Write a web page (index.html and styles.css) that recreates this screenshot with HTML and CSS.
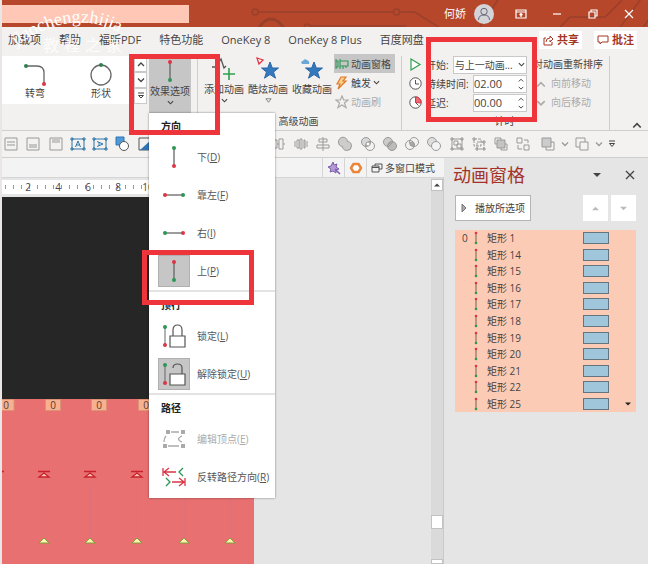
FILE: index.html
```
<!DOCTYPE html>
<html lang="zh-CN">
<head>
  <meta charset="UTF-8" />
  <title>动画窗格</title>
  <link rel="stylesheet" href="styles.css">
</head>
<body>
  <svg class="defs" width="0" height="0">
    <symbol id="up" viewBox="0 0 8 8"><path d="M1 6l3-3 3 3" fill="none" stroke="currentColor" stroke-width="1.3"/></symbol>
    <symbol id="down" viewBox="0 0 8 8"><path d="M1 2.500l3 3 3-3" fill="none" stroke="currentColor" stroke-width="1.3"/></symbol>
    <symbol id="solid-up" viewBox="0 0 8 8"><path d="M0 6l4-4 4 4z" fill="currentColor"/></symbol>
    <symbol id="solid-down" viewBox="0 0 8 8"><path d="M0 2l4 4 4-4z" fill="currentColor"/></symbol>
    <symbol id="star" viewBox="0 0 24 24"><path d="M14 5l2.300 6h6.200l-5 4 2 6.200-5.500-3.700-5.500 3.700 2-6.200-5-4h6.200z" fill="#3478bd" stroke="#2a65a5"/></symbol>
    <symbol id="path-v" viewBox="0 0 24 24"><path d="M12 3v18" stroke="#666" stroke-width="1.300"/><circle cx="12" cy="3" r="2" fill="#2f9555"/><circle cx="12" cy="21" r="2" fill="#dc3545"/></symbol>
    <symbol id="path-up" viewBox="0 0 24 24"><path d="M12 3v18" stroke="#666" stroke-width="1.300"/><circle cx="12" cy="3" r="2" fill="#dc3545"/><circle cx="12" cy="21" r="2" fill="#2f9555"/></symbol>
  </svg>

  <div class="app">
    <header class="titlebar">
      <svg class="circuit" viewBox="0 0 438 27" preserveAspectRatio="xMinYMin slice">
        <g fill="none" stroke="#99402c" stroke-width="1.500">
          <circle cx="46" cy="12" r="3"/><path d="M49 12h135"/><circle cx="187" cy="12" r="3"/><path d="M190 12h15l24 15"/>
          <path d="M50 27q12-16 24 0" stroke-width="3"/><circle cx="98" cy="27" r="3"/><path d="M101 26h96"/>
          <path d="M270 27l18-27M350 27l10-10h35l17-17M410 27l20-27M433 27l5-7"/>
        </g>
      </svg>
      <div class="doc-name"></div>
      <div class="account">
        <span>何娇</span>
        <svg width="20" height="20" viewBox="0 0 20 20"><circle cx="10" cy="10" r="10" fill="#d4d5d8"/><circle cx="10" cy="7.500" r="3.200" fill="none" stroke="#667"/><path d="M4.500 16q0-5 5.500-5t5.500 5" fill="none" stroke="#667"/></svg>
      </div>
      <div class="window-buttons">
        <button aria-label="功能区显示选项"><svg width="12" height="12" viewBox="0 0 12 12"><path d="M1 2h10v8H1zM1 4h10M6 9V5.500M4.500 7L6 5.500 7.500 7"/></svg></button>
        <button aria-label="最小化"><svg width="12" height="12" viewBox="0 0 12 12"><path d="M2 6h8"/></svg></button>
        <button aria-label="还原"><svg width="12" height="12" viewBox="0 0 12 12"><path d="M2 4h6v6H2zM4 4V2h6v6H8"/></svg></button>
        <button aria-label="关闭"><svg width="12" height="12" viewBox="0 0 12 12"><path d="M2 2l8 8M10 2l-8 8"/></svg></button>
      </div>
    </header>

    <nav class="tabs">
      <a href="#">加载项</a>
      <a href="#">帮助</a>
      <a href="#">福昕PDF</a>
      <a href="#">特色功能</a>
      <a href="#">OneKey 8</a>
      <a href="#">OneKey 8 Plus</a>
      <a href="#">百度网盘</a>
      <div class="tab-actions">
        <button><svg width="12" height="12" viewBox="0 0 12 12"><path d="M4 4H2v7h8V8M4 8q0-4 4-4V2l3 3-3 3V6"/></svg>共享</button>
        <button><svg width="12" height="12" viewBox="0 0 12 12"><path d="M1 2h10v6H5l-2 2V8H1z"/></svg>批注</button>
      </div>
    </nav>

    <section class="ribbon">
      <div class="gallery">
        <button class="gallery-item"><svg width="26" height="26" viewBox="0 0 26 26"><path d="M3 6h12q7 0 7 7v11" fill="none" stroke="#666" stroke-width="1.300"/><circle cx="4" cy="6" r="2" fill="#2f8050"/><circle cx="22" cy="24" r="2" fill="#dc3545"/></svg>转弯</button>
        <button class="gallery-item"><svg width="26" height="26" viewBox="0 0 26 26"><circle cx="13" cy="15" r="10" fill="none" stroke="#666" stroke-width="1.300"/><circle cx="13" cy="5" r="2" fill="#2f8050"/></svg>形状</button>
        <div class="gallery-scroll">
          <button aria-label="上一行"><svg width="8" height="8"><use href="#up"/></svg></button>
          <button aria-label="下一行"><svg width="8" height="8"><use href="#down"/></svg></button>
          <button aria-label="其他"><svg width="8" height="8" viewBox="0 0 8 8"><path d="M1 1h6M1.500 3.500h5L4 6z" fill="none" stroke="#444"/></svg></button>
        </div>
      </div>
      <button class="effect-button"><svg width="24" height="24"><use href="#path-up"/></svg>效果选项<svg width="7" height="7"><use href="#down"/></svg></button>

      <div class="group">
        <div class="group-body">
          <button class="big-button"><svg width="24" height="24" viewBox="0 0 24 24"><path d="M0 10h4l5-8 3 9 2-2" fill="none" stroke="#555" stroke-width="1.300"/><path d="M17 11v12M11 17h12" stroke="#2fa04f" stroke-width="1.600"/></svg>添加动画<svg width="7" height="7"><use href="#down"/></svg></button>
          <button class="big-button"><svg width="24" height="24" viewBox="0 0 24 24"><use href="#star"/><path d="M1 1l6 2-4 4z" fill="#fff" stroke="#dc3545" stroke-width="1.300"/></svg>酷炫动画<svg width="7" height="7" viewBox="0 0 8 8"><path d="M1 2h6L4 6z" fill="none" stroke="#777"/></svg></button>
          <button class="big-button"><svg width="24" height="24" viewBox="0 0 24 24"><use href="#star"/><path d="M2 7q-2-3 1-3 1-3 4-1 3 1 2 4z" fill="#69a7d8"/></svg>收藏动画</button>
          <div class="small-buttons">
            <button class="active"><svg width="14" height="12" viewBox="0 0 14 12"><path d="M1 1v10M1 3h2v6H1M5 1v10M5 3h8v5H5M8 8v3M11 8v2" fill="none" stroke="#2f9555" stroke-width="1.100"/></svg>动画窗格</button>
            <button><svg width="14" height="14" viewBox="0 0 14 14"><path d="M6 1h5L8 5h3L3 13l2-5H2z" fill="#fbd08a" stroke="#e0782a" stroke-width="1.200"/></svg>触发<svg width="7" height="7"><use href="#down"/></svg></button>
            <button disabled><svg width="14" height="14" viewBox="0 0 14 14"><path d="M7 1l1.700 4H13L9.500 8l1.500 4.500L7 10l-4 2.500L4.500 8 1 5h4.300z" fill="none" stroke="#aaa" stroke-width="1.200"/></svg>动画刷</button>
          </div>
        </div>
        <div class="group-name">高级动画</div>
      </div>

      <div class="group">
        <div class="group-body timing-body">
          <div class="timing">
            <div class="field">
              <svg width="13" height="13" viewBox="0 0 13 13"><path d="M2 1l9 5.500L2 12z" fill="#fff" stroke="#2fa04f" stroke-width="1.200"/></svg>
              <label for="start">开始:</label>
              <div class="box select-box"><select id="start"><option>与上一动画...</option></select><svg width="7" height="7"><use href="#down"/></svg></div>
            </div>
            <div class="field">
              <svg width="13" height="13" viewBox="0 0 13 13"><circle cx="6.500" cy="6.500" r="5.700" fill="#fff" stroke="#555"/><path d="M6.500 3v4H10" fill="none" stroke="#555"/></svg>
              <label for="duration" class="wide">持续时间:</label>
              <div class="box spin-box"><input id="duration" type="text" value="02.00"><div class="spin"><svg width="6" height="6"><use href="#up"/></svg><svg width="6" height="6"><use href="#down"/></svg></div></div>
            </div>
            <div class="field">
              <svg width="13" height="13" viewBox="0 0 13 13"><circle cx="6.500" cy="6.500" r="5.700" fill="#fff" stroke="#555"/><path d="M6.500 6.500V1a5.500 5.500 0 0 1 5.500 6z" fill="#f06a72" stroke="#dc3545"/><path d="M6.500 6.500l3 3" stroke="#555"/></svg>
              <label for="delay" class="wide">延迟:</label>
              <div class="box spin-box"><input id="delay" type="text" value="00.00"><div class="spin"><svg width="6" height="6"><use href="#up"/></svg><svg width="6" height="6"><use href="#down"/></svg></div></div>
            </div>
          </div>
          <div class="reorder">
            <span>对动画重新排序</span>
            <button disabled><svg width="10" height="10"><use href="#up"/></svg>向前移动</button>
            <button disabled><svg width="10" height="10"><use href="#down"/></svg>向后移动</button>
          </div>
        </div>
        <div class="group-name">计时</div>
      </div>
      <button class="collapse" aria-label="折叠功能区"><svg width="10" height="10"><use href="#up"/></svg></button>
    </section>

    <div class="toolbar">
      <div class="tools">
        <svg viewBox="0 0 16 16"><path d="M2 2h12v12H2zM4 6h8M4 9h8"/></svg>
        <svg viewBox="0 0 16 16"><path d="M2 2h12v12H2zM4 9h8M4 11h8"/></svg>
        <svg viewBox="0 0 16 16"><path d="M2 2h12v12H2zM4 4h8M4 6h8"/></svg>
        <svg viewBox="0 0 16 16" class="blue"><path d="M2 3h12v10H2zM5.500 11L8 5l2.500 6M6.500 9h3"/><path d="M1 2h2v2H1zM13 2h2v2h-2zM1 12h2v2H1zM13 12h2v2h-2z"/></svg>
        <svg viewBox="0 0 16 16" class="blue"><path d="M2 3h12v10H2zM5 5.500L11 8l-6 2.500M7 6.500v3"/><path d="M1 2h2v2H1zM13 2h2v2h-2zM1 12h2v2H1zM13 12h2v2h-2z"/></svg>
        <svg viewBox="0 0 16 16"><path d="M2 1h8v8H2z" fill="#4f9bd9" stroke="#2f75b5"/><circle cx="10" cy="10" r="4.500" fill="#fff" stroke="#555"/></svg>
        <svg viewBox="0 0 16 16"><path d="M2 2h12v12H2z" stroke="#555"/><path d="M3 14L14 4v10z" fill="#2f75b5" stroke="none"/></svg>
        <svg viewBox="0 0 16 16"><path d="M8 1v14M3 3h10v3H3zM5 9h6v3H5z"/></svg>
        <svg viewBox="0 0 16 16"><path d="M2 1v14M4 3h9v3H4zM4 9h6v3H4z"/></svg>
        <svg viewBox="0 0 16 16"><path d="M14 1v14M3 3h9v3H3zM6 9h6v3H6z"/></svg>
        <svg viewBox="0 0 16 16"><path d="M1 2h14M3 4h3v9H3zM9 4h3v6H9z"/></svg>
        <svg viewBox="0 0 16 16"><path d="M1 14h14M3 3h3v9H3zM9 6h3v6H9z"/></svg>
        <svg viewBox="0 0 16 16"><path d="M1 8h2M7 8h2M13 8h2M3 4h4v8H3zM9 3h4v10H9z"/></svg>
        <svg viewBox="0 0 16 16"><path d="M2 5v6M14 5v6M4 4h2v8H4zM7 3h2v10H7zM11 4h1v8h-1z"/></svg>
        <svg viewBox="0 0 16 16"><path d="M8 1v14M4 3h8v3H4zM2 9h12v3H2z"/></svg>
        <svg viewBox="0 0 16 16"><path d="M1.500 6a4.500 4.500 0 0 1 9-.500 4.500 4.500 0 1 1-5 5 4.500 4.500 0 0 1-4-4.500z" fill="#ccc"/></svg>
        <svg viewBox="0 0 16 16"><circle cx="6" cy="6" r="4.500" fill="#d8d8d8"/><circle cx="10" cy="10" r="4.500"/><circle cx="8" cy="8" r="2" fill="#fff"/></svg>
        <svg viewBox="0 0 16 16"><circle cx="6" cy="6" r="4.500" fill="#ccc"/><circle cx="10" cy="10" r="4.500" fill="#bbb"/><path d="M5 10L10 5M6 11l5-5"/></svg>
        <svg viewBox="0 0 16 16"><circle cx="6" cy="9" r="4.500"/><circle cx="10" cy="6" r="4.500"/><circle cx="8" cy="8" r="2" fill="#aaa"/></svg>
        <svg viewBox="0 0 16 16"><circle cx="6" cy="6" r="4.500" fill="#ddd"/><circle cx="10" cy="10" r="4.500" fill="#f3f3f3"/></svg>
        <svg viewBox="0 0 16 16"><path d="M3 3h10v10H3zM5 5h4v4H5zM8 8h4v4H8z"/><path d="M2 2h2v2H2zM12 2h2v2h-2zM2 12h2v2H2zM12 12h2v2h-2z"/></svg>
        <svg viewBox="0 0 16 16"><path d="M3 3h7v7H3zM6 6h7v7H6z" stroke-dasharray="3 1"/><path d="M2 2h2v2H2zM12 12h2v2h-2zM12 5h2v2h-2zM5 12h2v2H5z"/></svg>
        <svg viewBox="0 0 16 16"><path d="M2 2h6v6H2zM8 8h6v6H8z"/><path d="M4 4h8v8H4z" fill="#c4c4c4"/></svg>
        <svg viewBox="0 0 16 16"><path d="M2 2h5v5H2zM9 9h5v5H9zM9 4h4v3M3 9v4h4"/></svg>
      </div>
      <div class="more-tools">
        <svg viewBox="0 0 16 16"><path d="M6 6h8v8H6z"/><path d="M2 2h9v9H2z" fill="#ccc"/></svg>
        <svg class="caret"><use href="#down"/></svg>
        <svg viewBox="0 0 16 16"><path d="M2 2h9v9H2z"/><path d="M6 6h8v8H6z" fill="#f3f3f3"/></svg>
        <svg class="caret"><use href="#down"/></svg>
        <svg class="caret" viewBox="0 0 8 8"><path d="M1 1h6M1.500 3.500h5L4 6.500z" stroke="#444"/></svg>
      </div>
    </div>

    <main class="workspace">
      <section class="editor">
        <div class="mode-bar">
          <button aria-label="魔棒"><svg width="14" height="14" viewBox="0 0 14 14"><path d="M6 1l1 3 3-1-1 3 3 2-3 1v3L6 10l-3 1 1-3-3-2 3-1z" fill="#b49bd8" stroke="#7d5bab"/><path d="M8 8l5 5" stroke="#7d5bab" stroke-width="1.500"/></svg></button>
          <button aria-label="设置"><svg width="14" height="14" viewBox="0 0 14 14"><path d="M4.500 3h5L12 7l-2.500 4h-5L2 7z" fill="#fff" stroke="#e8873c" stroke-width="2.500" stroke-linejoin="round"/></svg></button>
          <button class="window-mode"><svg width="12" height="12" viewBox="0 0 12 12"><path d="M1 4h7v6H1zM1 5.500h7M4 4V2h7v5H8" fill="none" stroke="#555"/></svg>多窗口模式</button>
        </div>
        <div class="canvas-row">
          <div class="canvas">
            <div class="ruler"><span>2</span><span>4</span><span>6</span><span>8</span><span>10</span></div>
            <svg class="slide" width="252" height="367" viewBox="0 0 252 367">
              <rect width="252" height="367" fill="#262626"/>
              <rect y="202" width="252" height="165" fill="#e87070"/>
              <g fill="#f7b090" stroke="#dc9275">
                <path d="M-3 202.500h15v11H-3zM43.500 202.500h15v11h-15zM89.500 202.500h15v11h-15zM136.500 202.500h15v11h-15z"/>
              </g>
              <g class="tag-text"><text x="4" y="212">0</text><text x="51" y="212">0</text><text x="97" y="212">0</text><text x="144" y="212">0</text></g>
              <path d="M42.500 285v55M88.500 285v55M135.500 285v55M182.500 285v55M228.500 285v55" stroke="#de7078"/>
              <g fill="#f9c9b5" stroke="#c8202c" stroke-width="1.300">
                <path d="M36 274.500h12M37 280l5-4 5 4zM82 274.500h12M83 280l5-4 5 4zM129 274.500h12M130 280l5-4 5 4zM-4 274.500h6"/>
              </g>
              <g fill="#fdf5b0" stroke="#7fa03a">
                <path d="M37 346l5-5 5 5zM83 346l5-5 5 5zM130 346l5-5 5 5zM177 346l5-5 5 5zM223 346l5-5 5 5z"/>
              </g>
            </svg>
          </div>
          <div class="scrollbar">
            <button aria-label="向上滚动"><svg width="6" height="6"><use href="#solid-up"/></svg></button>
            <div class="thumb"></div>
            <div class="thumb end"></div>
          </div>
        </div>
      </section>

      <aside class="pane">
        <div class="pane-head">
          <h2>动画窗格</h2>
          <button aria-label="窗格选项"><svg width="8" height="8"><use href="#solid-down"/></svg></button>
          <button aria-label="关闭窗格"><svg width="10" height="10" viewBox="0 0 10 10"><path d="M1 1l8 8M9 1L1 9" stroke="#444" stroke-width="1.300"/></svg></button>
        </div>
        <div class="pane-tools">
          <button class="play"><svg width="6" height="8" viewBox="0 0 6 8"><path d="M1 0l4 4-4 4z" fill="#aaa" stroke="#777"/></svg>播放所选项</button>
          <button class="move" aria-label="上移"><svg width="7" height="7"><use href="#solid-up"/></svg></button>
          <button class="move" aria-label="下移"><svg width="7" height="7"><use href="#solid-down"/></svg></button>
        </div>
        <ul class="effects" id="effects"></ul>
      </aside>
    </main>

    <div class="menu">
      <h3>方向</h3>
      <button><span class="icon"><svg width="24" height="24"><use href="#path-v"/></svg></span>下(<u>D</u>)</button>
      <button><span class="icon"><svg width="24" height="24" viewBox="0 0 24 24"><path d="M3 12h18" stroke="#666" stroke-width="1.300"/><circle cx="3" cy="12" r="2" fill="#dc3545"/><circle cx="21" cy="12" r="2" fill="#2f9555"/></svg></span>靠左(<u>F</u>)</button>
      <button><span class="icon"><svg width="24" height="24" viewBox="0 0 24 24"><path d="M3 12h18" stroke="#666" stroke-width="1.300"/><circle cx="3" cy="12" r="2" fill="#2f9555"/><circle cx="21" cy="12" r="2" fill="#dc3545"/></svg></span>右(<u>I</u>)</button>
      <button><span class="icon selected"><svg width="24" height="24"><use href="#path-up"/></svg></span>上(<u>P</u>)</button>
      <hr>
      <h3>顶行</h3>
      <button><span class="icon"><svg width="24" height="24" viewBox="0 0 24 24"><path d="M3 3v18" stroke="#666"/><circle cx="3" cy="3" r="2" fill="#2f9555"/><circle cx="3" cy="21" r="2" fill="#dc3545"/><path d="M8 12h15v11H8zM11 12V6q0-5 4.500-5T20 6v6" fill="none" stroke="#555" stroke-width="1.200"/></svg></span>锁定(<u>L</u>)</button>
      <button><span class="icon selected"><svg width="24" height="24" viewBox="0 0 24 24"><path d="M3 3v18" stroke="#666"/><circle cx="3" cy="3" r="2" fill="#2f9555"/><circle cx="3" cy="21" r="2" fill="#dc3545"/><path d="M8 12h15v11H8z" fill="#fff" stroke="#555" stroke-width="1.200"/><path d="M11 6q0-4 4.500-4T20 6v6" fill="none" stroke="#555" stroke-width="1.200"/></svg></span>解除锁定(<u>U</u>)</button>
      <hr>
      <h3>路径</h3>
      <button disabled><span class="icon"><svg width="24" height="24" viewBox="0 0 24 24"><path d="M9 5h8M6 19h11M4 9q-2 2-2 6M20 9q-7 3 0 6" fill="none" stroke="#aaa" stroke-width="1.300"/><path d="M4 3h4v4H4zM19 3h4v4h-4zM1 17h4v4H1zM19 17h4v4h-4z" fill="#aaa"/></svg></span>编辑顶点(<u>E</u>)</button>
      <button><span class="icon"><svg width="24" height="24" viewBox="0 0 24 24"><g fill="none" stroke-width="1.300"><path d="M1 3v8M7 3L2 7l5 4M2 7h12M23 13v8M17 13l5 4-5 4M10 17h12" stroke="#dc3545"/><path d="M21 3l-4 4 4 4M4 13l4 4-4 4" stroke="#2f9555"/></g></svg></span>反转路径方向(<u>R</u>)</button>
    </div>

    <!-- site watermark and the callout frames lie over the whole window -->
    <svg class="watermark" width="160" height="64" viewBox="0 0 160 64">
      <path id="arc" d="M14 46Q76 2 130 40" fill="none"/>
      <text class="mark-latin"><textPath href="#arc">jiaochengzhijia</textPath></text>
      <text class="mark-han" x="41 62 83 104" y="51">教程之家</text>
    </svg>
    <div class="callout callout-effect"></div>
    <div class="callout callout-timing"></div>
    <div class="callout callout-up"></div>
  </div>

  <script>
    const effects = [1, 14, 15, 16, 17, 18, 19, 20, 21, 22, 25];
    const list = document.getElementById("effects");

    effects.forEach((number, i) => {
      const item = document.createElement("li");
      const last = i === effects.length - 1;
      item.innerHTML = `
        <span class="order">${i === 0 ? "0" : ""}</span>
        <svg width="4" height="14" viewBox="0 0 4 14"><path d="M2 1v12" stroke="#75604f"/><circle cx="2" cy="2" r="1.300" fill="#dc3545"/><circle cx="2" cy="12" r="1.300" fill="#2f9555"/></svg>
        <span class="name">矩形 ${number}</span>
        <span class="bar"></span>
        <span class="more">${last ? '<svg width="6" height="6"><use href="#solid-down"/></svg>' : ""}</span>`;
      list.appendChild(item);
    });
  </script>
</body>
</html>
```

FILE: styles.css
```
* {
  box-sizing: border-box;
}

body {
  margin: 0;
  background: #e5e5e5;
  color: #444;
  font-family: "Open Sans", "Noto Sans CJK SC", sans-serif;
  font-size: 10px;
  line-height: 14px;
}

button,
input,
select {
  font: inherit;
  color: inherit;
  margin: 0;
  padding: 0;
  border: none;
  background: none;
}

button {
  display: flex;
  align-items: center;
  justify-content: center;
  white-space: nowrap;
}

svg {
  flex: none;
}

.defs {
  position: absolute;
}

.app {
  position: relative;
  display: flex;
  flex-direction: column;
  height: 100vh;
  overflow: hidden;
  border-left: 2px solid #e9e6e5;
}

/* title bar */
.titlebar {
  position: relative;
  display: flex;
  align-items: center;
  flex: none;
  height: 27px;
  background: #b7472a;
  color: #fff;
}

.circuit {
  position: absolute;
  right: 0;
  top: 0;
  width: 68%;
  height: 27px;
}

.doc-name {
  width: 187px;
  height: 18px;
  background: #ffc7b5;
}

.account {
  position: relative;
  display: flex;
  align-items: center;
  gap: 8px;
  margin-left: auto;
  font-size: 11px;
}

.window-buttons {
  position: relative;
  display: flex;
  padding: 0 1px 0 9px;
}

.window-buttons button {
  width: 36px;
  height: 27px;
}

.window-buttons svg {
  fill: none;
  stroke: #fff;
  stroke-width: 1.2;
}

/* tabs */
.tabs {
  display: flex;
  align-items: center;
  gap: 18px;
  flex: none;
  height: 27px;
  padding: 0 11px 2px 6px;
  background: #f3f1f0;
  font-size: 11px;
}

.tabs a {
  color: #444;
  text-decoration: none;
  white-space: nowrap;
}

.tab-actions {
  display: flex;
  gap: 12px;
  margin-left: auto;
}

.tab-actions button {
  gap: 3px;
  height: 18px;
  padding: 0 3px;
  background: #fff;
  color: #a5371f;
  font-weight: bold;
}

.tab-actions svg {
  fill: none;
  stroke: #a5371f;
}

/* ribbon */
.ribbon {
  display: flex;
  flex: none;
  height: 77px;
  padding-top: 2px;
  background: #f3f1f0;
  border-bottom: 1px solid #d0cecd;
}

.gallery {
  display: flex;
  height: 48px;
  background: #fff;
}

.gallery-item {
  flex-direction: column;
  width: 66px;
}

.gallery-scroll button {
  width: 13px;
  height: 16px;
  border: 1px solid #c9c9c9;
}

.effect-button {
  flex-direction: column;
  gap: 1px;
  width: 42px;
  height: 57px;
  margin: 0 6px 0 2px;
  padding-bottom: 4px;
  background: #c6c6c6;
}

.group {
  display: flex;
  flex-direction: column;
  padding: 0 6px 0 4px;
  border-left: 1px solid #d0cecd;
}

.group:nth-of-type(3) {
  border-right: 1px solid #d0cecd;
}

.group-body {
  display: flex;
  height: 58px;
}

.group-name {
  text-align: center;
}

.big-button {
  flex-direction: column;
  justify-content: flex-start;
  gap: 1px;
  width: 44px;
  padding-top: 1px;
}

.small-buttons {
  display: flex;
  flex-direction: column;
  width: 61px;
  height: 57px;
  margin-top: -2px;
}

.small-buttons button {
  justify-content: flex-start;
  gap: 2px;
  height: 19px;
  padding-left: 1px;
}

.small-buttons .active {
  background: #c6c6c6;
}

button:disabled {
  color: #aaa;
}

.timing-body {
  gap: 6px;
  padding-left: 3px;
}

.timing {
  width: 118px;
  margin-top: -1px;
}

.field {
  display: flex;
  align-items: center;
  gap: 4px;
  height: 19px;
}

.field label {
  white-space: nowrap;
}

.field .wide {
  width: 43px;
}

.box {
  display: flex;
  align-items: center;
  flex: 1;
  min-width: 0;
  height: 18px;
  background: #fff;
  border: 1px solid #c9c9c9;
}

.select-box select {
  flex: 1;
  min-width: 0;
  height: 16px;
  padding-left: 1px;
  appearance: none;
}

.select-box svg {
  margin: 0 1px;
}

.spin-box input {
  flex: 1;
  min-width: 0;
  width: 20px;
  height: 16px;
  font-size: 11px;
}

.spin {
  display: flex;
  flex-direction: column;
  gap: 2px;
  padding-right: 2px;
}

.reorder {
  display: flex;
  flex-direction: column;
  margin-top: -1px;
  white-space: nowrap;
}

.reorder span,
.reorder button {
  height: 19px;
  line-height: 19px;
}

.reorder button {
  justify-content: flex-start;
  gap: 5px;
  padding-left: 3px;
}

.collapse {
  align-self: flex-end;
  margin: 0 6px 0 auto;
}

/* quick access toolbar */
.toolbar {
  display: flex;
  align-items: center;
  flex: none;
  height: 27px;
  background: #f3f2f1;
  border-bottom: 1px solid #d0cecd;
}

.toolbar svg {
  width: 16px;
  height: 16px;
  fill: none;
  stroke: #999;
}

.toolbar .blue {
  stroke: #2f75a5;
}

.tools {
  display: flex;
  justify-content: space-between;
  width: 82%;
  padding-left: 1px;
}

.more-tools {
  display: flex;
  align-items: center;
  gap: 5px;
  padding-left: 8px;
}

.toolbar .caret {
  width: 8px;
  height: 8px;
  color: #999;
}

/* workspace */
.workspace {
  display: flex;
  flex: 1;
  min-height: 0;
}

.editor {
  display: flex;
  flex-direction: column;
  flex: 1;
  min-width: 0;
}

.mode-bar {
  display: flex;
  justify-content: flex-end;
  flex: none;
  height: 20px;
  background: #f3f3f3;
  border-bottom: 1px solid #d5d5d5;
}

.mode-bar button {
  width: 22px;
  border-left: 1px solid #d5d5d5;
}

.mode-bar .window-mode {
  justify-content: flex-start;
  gap: 2px;
  width: 78px;
  padding-left: 4px;
}

.canvas-row {
  display: flex;
  flex: 1;
  min-height: 0;
}

.canvas {
  flex: 1;
  min-width: 0;
  overflow: hidden;
}

.ruler {
  display: flex;
  width: 252px;
  height: 14px;
  margin: 2px 0 3px;
  padding-left: 11px;
  overflow: hidden;
  background: repeating-linear-gradient(90deg, transparent 0 3px, #999 3px 4px, transparent 4px 8px) 0 5px / 100% 4px no-repeat #fff;
}

.ruler span {
  flex: none;
  width: 30px;
  text-align: center;
}

.slide {
  display: block;
}

.tag-text {
  fill: #5a3a2c;
  font-size: 10px;
  text-anchor: middle;
}

.scrollbar {
  display: flex;
  flex-direction: column;
  width: 13px;
  padding-top: 1px;
  background: #dadada;
  border-right: 1px solid #c9c9c9;
}

.scrollbar button,
.thumb {
  flex: none;
  height: 12px;
  background: #fff;
  border: 1px solid #c2c2c2;
}

.thumb {
  height: 14px;
  margin-top: auto;
}

.thumb.end {
  height: 5px;
  margin-top: 30px;
}

/* animation pane */
.pane {
  width: 204px;
  padding: 0 12px 0 11px;
}

.pane-head {
  display: flex;
  align-items: center;
  height: 37px;
  padding-bottom: 4px;
}

.pane-head h2 {
  flex: 1;
  margin: 0 0 0 -2px;
  color: #a4322a;
  font-size: 18px;
  font-weight: normal;
  line-height: 24px;
}

.pane-head button {
  width: 12px;
  height: 12px;
  margin-left: 21px;
}

.pane-tools {
  display: flex;
  gap: 3px;
  height: 26px;
}

.play {
  gap: 8px;
  width: 76px;
  margin-right: auto;
  background: #fff;
  border: 1px solid #b5b5b5;
}

.move {
  width: 25px;
  background: #fff;
  color: #bbb;
}

.effects {
  display: flex;
  flex-direction: column;
  height: 182px;
  margin: 9px 0 0;
  padding: 0;
  list-style: none;
  background: #fccbb5;
}

.effects li {
  display: flex;
  align-items: center;
  flex: 1;
  min-height: 0;
}

.order {
  width: 19px;
  padding-left: 7px;
}

.name {
  flex: 1;
  padding-left: 9px;
}

.bar {
  width: 26px;
  height: 12px;
  background: #9fc6da;
  border: 1px solid #65757f;
}

.more {
  display: flex;
  justify-content: center;
  width: 27px;
  padding-left: 10px;
  color: #222;
}

/* effect options menu */
.menu {
  position: absolute;
  left: 147px;
  top: 113px;
  width: 126px;
  padding-bottom: 2px;
  background: #fff;
  box-shadow: 0 0 2px rgba(0, 0, 0, 0.5);
}

.menu h3 {
  height: 25px;
  margin: 0;
  padding-left: 12px;
  color: #222;
  font-size: 10px;
  line-height: 26px;
}

.menu button {
  justify-content: flex-start;
  width: 100%;
  height: 38px;
  padding-left: 9px;
  color: #555;
}

.menu button:disabled {
  color: #aaa;
}

.menu .icon {
  display: flex;
  align-items: center;
  justify-content: center;
  width: 32px;
  height: 32px;
  margin-right: 7px;
}

.menu .selected {
  background: #c6c6c6;
  border: 1px solid #b0b0b0;
}

.menu hr {
  height: 2px;
  margin: 0;
  border: none;
  background: #e3e3e3;
}

/* overlays */
.watermark {
  position: absolute;
  left: 0;
  top: 0;
  fill: #fff;
  pointer-events: none;
}

.mark-latin {
  font-family: "Liberation Serif", serif;
  font-size: 18px;
}

.mark-han {
  font-size: 16px;
  opacity: 0.8;
}

.callout {
  position: absolute;
  border: 5px solid #ee353c;
  pointer-events: none;
}

.callout-effect {
  left: 127px;
  top: 54px;
  width: 91px;
  height: 81px;
}

.callout-timing {
  left: 424px;
  top: 37px;
  width: 111px;
  height: 85px;
}

.callout-up {
  left: 140px;
  top: 250px;
  width: 112px;
  height: 55px;
}
```
